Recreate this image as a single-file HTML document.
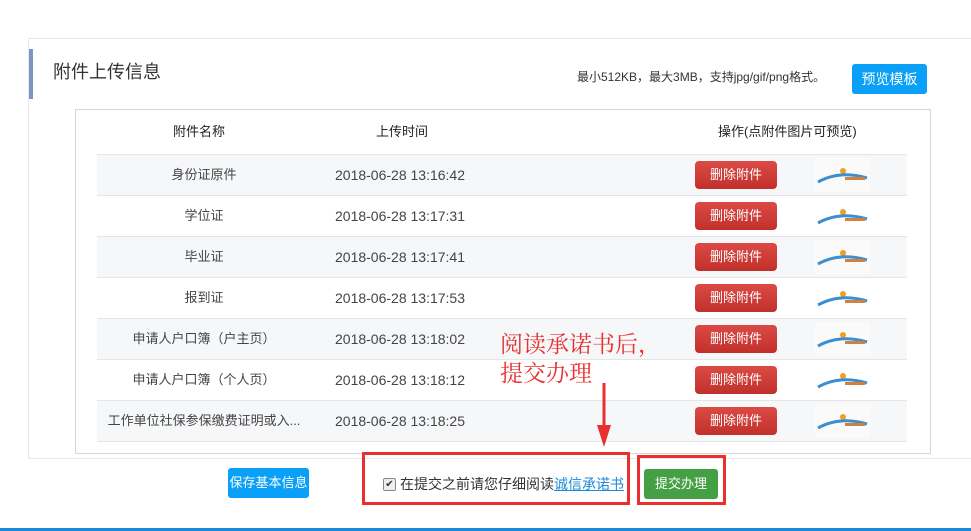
<!DOCTYPE html>
<html><head><meta charset="utf-8"><style>
body{margin:0;width:971px;height:531px;background:#fff;position:relative;overflow:hidden;font-family:"Liberation Sans","Noto Sans CJK SC",sans-serif;}
.a{position:absolute;line-height:1.2}
.panel{left:28px;top:38px;width:960px;height:419px;border:1px solid #e8e8e8;border-right:none}
.bar{left:29px;top:49px;width:4px;height:50px;background:#7b96c4}
.title{left:53px;top:62px;font-size:18px;color:#333}
.tip{left:577px;top:70px;font-size:12px;color:#333}
.pv{left:852px;top:64px;width:75px;height:30px;background:#0aa0f7;color:#fff;border-radius:3px;font-size:14px;text-align:center;line-height:30px}
.tb{left:75px;top:109px;width:854px;height:343px;border:1px solid #d6d6d6}
.hd{top:124px;font-size:13px;color:#222;line-height:16px}
.row{left:97px;width:810px;height:40px;border-top:1px solid #e5e5e5}
.g{background:#f6f7f9}
.nm{position:absolute;left:0;width:214px;text-align:center;top:12px;font-size:13px;color:#444;line-height:16px}
.tm{position:absolute;left:238px;top:12px;font-size:14px;color:#444;line-height:16px}
.del{position:absolute;left:598px;top:6px;width:82px;height:28px;border-radius:4px;background:linear-gradient(#db4a45,#c2302c);color:#fff;font-size:13px;text-align:center;line-height:28px}
.img{position:absolute;left:718px;top:3px;width:55px;height:34px;background:#fafafa}
.save{left:228px;top:468px;width:81px;height:30px;background:#0aa0f7;color:#fff;border-radius:3px;font-size:13px;text-align:center;line-height:30px}
.sub{left:644px;top:469px;width:74px;height:30px;background:#45a045;color:#fff;border-radius:3px;font-size:13px;text-align:center;line-height:30px}
.rb{border:3px solid #e8302f}
</style></head><body>
<div class="a panel"></div><div class="a bar"></div>
<div class="a title">附件上传信息</div>
<div class="a tip">最小512KB，最大3MB，支持jpg/gif/png格式。</div>
<div class="a pv">预览模板</div>
<div class="a tb"></div>
<div class="a hd" style="left:173px">附件名称</div>
<div class="a hd" style="left:376px">上传时间</div>
<div class="a hd" style="left:718px">操作(点附件图片可预览)</div>

<div class="a row g" style="top:154px"><div class="nm">身份证原件</div><div class="tm">2018-06-28 13:16:42</div><div class="del">删除附件</div><div class="img"><svg width="55" height="34"><circle cx="28" cy="13" r="3" fill="#f0a020"/><path d="M3 24 Q25 12 52 20" stroke="#3a8fd0" stroke-width="3" fill="none"/><rect x="30" y="19" width="20" height="3" fill="#d08040"/></svg></div></div>
<div class="a row" style="top:195px"><div class="nm">学位证</div><div class="tm">2018-06-28 13:17:31</div><div class="del">删除附件</div><div class="img" style="background:#fff"><svg width="55" height="34"><circle cx="28" cy="13" r="3" fill="#f0a020"/><path d="M3 24 Q25 12 52 20" stroke="#3a8fd0" stroke-width="3" fill="none"/><rect x="30" y="19" width="20" height="3" fill="#d08040"/></svg></div></div>
<div class="a row g" style="top:236px"><div class="nm">毕业证</div><div class="tm">2018-06-28 13:17:41</div><div class="del">删除附件</div><div class="img"><svg width="55" height="34"><circle cx="28" cy="13" r="3" fill="#f0a020"/><path d="M3 24 Q25 12 52 20" stroke="#3a8fd0" stroke-width="3" fill="none"/><rect x="30" y="19" width="20" height="3" fill="#d08040"/></svg></div></div>
<div class="a row" style="top:277px"><div class="nm">报到证</div><div class="tm">2018-06-28 13:17:53</div><div class="del">删除附件</div><div class="img" style="background:#fff"><svg width="55" height="34"><circle cx="28" cy="13" r="3" fill="#f0a020"/><path d="M3 24 Q25 12 52 20" stroke="#3a8fd0" stroke-width="3" fill="none"/><rect x="30" y="19" width="20" height="3" fill="#d08040"/></svg></div></div>
<div class="a row g" style="top:318px"><div class="nm">申请人户口簿（户主页）</div><div class="tm">2018-06-28 13:18:02</div><div class="del">删除附件</div><div class="img"><svg width="55" height="34"><circle cx="28" cy="13" r="3" fill="#f0a020"/><path d="M3 24 Q25 12 52 20" stroke="#3a8fd0" stroke-width="3" fill="none"/><rect x="30" y="19" width="20" height="3" fill="#d08040"/></svg></div></div>
<div class="a row" style="top:359px"><div class="nm">申请人户口簿（个人页）</div><div class="tm">2018-06-28 13:18:12</div><div class="del">删除附件</div><div class="img" style="background:#fff"><svg width="55" height="34"><circle cx="28" cy="13" r="3" fill="#f0a020"/><path d="M3 24 Q25 12 52 20" stroke="#3a8fd0" stroke-width="3" fill="none"/><rect x="30" y="19" width="20" height="3" fill="#d08040"/></svg></div></div>
<div class="a row g" style="top:400px;border-bottom:1px solid #e5e5e5"><div class="nm">工作单位社保参保缴费证明或入...</div><div class="tm">2018-06-28 13:18:25</div><div class="del">删除附件</div><div class="img"><svg width="55" height="34"><circle cx="28" cy="13" r="3" fill="#f0a020"/><path d="M3 24 Q25 12 52 20" stroke="#3a8fd0" stroke-width="3" fill="none"/><rect x="30" y="19" width="20" height="3" fill="#d08040"/></svg></div></div>

<div class="a" style="left:500px;top:328px;font-size:23px;line-height:29px;color:#e8302f;font-family:'Noto Serif CJK SC',serif">阅读承诺书后，<br>提交办理</div>
<svg class="a" style="left:594px;top:383px" width="20" height="65"><line x1="10" y1="0" x2="10" y2="50" stroke="#e8302f" stroke-width="3"/><polygon points="3,42 17,42 10,64" fill="#e8302f"/></svg>

<div class="a save">保存基本信息</div>
<div class="a rb" style="left:362px;top:452px;width:262px;height:47px"></div>
<div class="a" style="left:383px;top:478px;width:11px;height:11px;border:1px solid #888;background:#eee;border-radius:2px;font-size:10px;line-height:11px;text-align:center;color:#333">✔</div>
<div class="a" style="left:400px;top:476px;font-size:14px;color:#333;line-height:17px">在提交之前请您仔细阅读<span style="color:#1a8ad8;text-decoration:underline">诚信承诺书</span></div>
<div class="a rb" style="left:637px;top:455px;width:83px;height:44px"></div>
<div class="a sub">提交办理</div>
<div class="a" style="left:0;top:528px;width:971px;height:3px;background:#1a8ad8"></div>
</body></html>
